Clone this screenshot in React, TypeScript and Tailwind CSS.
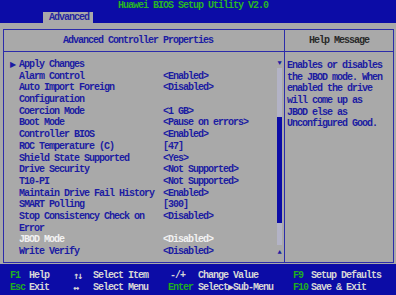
import React from "react";

const rows: { label: string; value?: string; arrow?: boolean; hi?: boolean }[] = [
  { label: "Apply Changes", arrow: true },
  { label: "Alarm Control", value: "<Enabled>" },
  { label: "Auto Import Foreign", value: "<Disabled>" },
  { label: "Configuration" },
  { label: "Coercion Mode", value: "<1 GB>" },
  { label: "Boot Mode", value: "<Pause on errors>" },
  { label: "Controller BIOS", value: "<Enabled>" },
  { label: "ROC Temperature (C)", value: "[47]" },
  { label: "Shield State Supported", value: "<Yes>" },
  { label: "Drive Security", value: "<Not Supported>" },
  { label: "T10-PI", value: "<Not Supported>" },
  { label: "Maintain Drive Fail History", value: "<Enabled>" },
  { label: "SMART Polling", value: "[300]" },
  { label: "Stop Consistency Check on", value: "<Disabled>" },
  { label: "Error" },
  { label: "JBOD Mode", value: "<Disabled>", hi: true },
  { label: "Write Verify", value: "<Disabled>" },
];

const help = [
  "Enables or disables",
  "the JBOD mode. When",
  "enabled the drive",
  "will come up as",
  "JBOD else as",
  "Unconfigured Good.",
];

export default function App() {
  return (
    <div className="w-[396px] h-[295px] bg-[#a9a9a9] flex flex-col overflow-hidden font-['Liberation_Mono','DejaVu_Sans_Mono',monospace] text-[10px] tracking-[-1px] font-bold">
      {/* top bar */}
      <div className="h-[23px] bg-[#0c0ca6] flex flex-col">
        <div className="h-[12px] pl-[118px] leading-[12px] text-[#28b428]">Huawei BIOS Setup Utility V2.0</div>
        <div className="pl-[43px] flex">
          <div className="w-[50px] h-[11px] bg-[#a9a9a9] pl-[6px] leading-[11px] text-[#2424a0]">Advanced</div>
        </div>
      </div>

      {/* body */}
      <div className="flex-1 pl-[3px] pr-[2px] pt-[6px] pb-[1px]">
        <div className="h-full border border-[#2c2caa] grid grid-cols-[281px_1fr] grid-rows-[22px_1fr]">
          <div className="border-r border-b border-[#2c2caa] flex items-center justify-center pr-[12px] text-[#1c1ca2]">
            Advanced Controller Properties
          </div>
          <div className="border-b border-[#2c2caa] flex items-center justify-center text-[#2a2a2a]">
            Help Message
          </div>

          <div className="border-r border-[#2c2caa] flex">
            <div className="flex-1 pt-[7px] flex flex-col">
              {rows.map((r, i) => (
                <div
                  key={i}
                  className={`grid grid-cols-[15px_144px_1fr] h-[11.7px] leading-[11.7px] whitespace-nowrap ${
                    r.hi ? "text-[#f2f2f2]" : "text-[#1c1ca2]"
                  }`}
                >
                  <span className="pl-[6px] text-[8px] tracking-normal font-['DejaVu_Sans',sans-serif]">{r.arrow ? "▶" : ""}</span>
                  <span>{r.label}</span>
                  <span>{r.value ?? ""}</span>
                </div>
              ))}
            </div>
            <div className="w-[5px] mr-[2px] pt-[6px] flex flex-col">
              <div className="h-[10px] flex items-center justify-center text-[7px] tracking-normal text-[#1c1ca2] leading-none">▼</div>
              <div className="h-[49px] bg-[#b3b3c6]" />
              <div className="h-[106px] bg-[#0c0ca6]" />
              <div className="h-[22px] bg-[#b3b3c6]" />
              <div className="mt-[2px] h-[10px] flex items-center justify-center text-[7px] tracking-normal text-[#1c1ca2] leading-none">▲</div>
            </div>
          </div>

          <div className="pl-[2px] pt-[8px] flex flex-col text-[#1c1ca2]">
            {help.map((l, i) => (
              <div key={i} className="h-[11.7px] leading-[11.7px] whitespace-nowrap">
                {l}
              </div>
            ))}
          </div>
        </div>
      </div>

      {/* footer */}
      <div className="h-[31px] bg-[#0c0ca6] pt-[6px] text-[#d6d6d6]">
        <div className="grid grid-cols-[10px_19px_44px_20px_75px_30px_95px_18px_1fr] h-[11.7px] leading-[11.7px] whitespace-nowrap">
          <span />
          <span className="text-[#1fae1f]">F1</span>
          <span>Help</span>
          <span className="font-['DejaVu_Sans_Mono',monospace] tracking-[-2px]">↑↓</span>
          <span>Select Item</span>
          <span className="pl-[2px]">-/+</span>
          <span>Change Value</span>
          <span className="text-[#1fae1f]">F9</span>
          <span>Setup Defaults</span>
        </div>
        <div className="grid grid-cols-[10px_19px_44px_20px_75px_30px_95px_18px_1fr] h-[11.7px] leading-[11.7px] whitespace-nowrap">
          <span />
          <span className="text-[#1fae1f]">Esc</span>
          <span>Exit</span>
          <span className="font-['DejaVu_Sans_Mono',monospace] tracking-normal">↔</span>
          <span>Select Menu</span>
          <span className="text-[#1fae1f]">Enter</span>
          <span>Select▶Sub-Menu</span>
          <span className="text-[#1fae1f]">F10</span>
          <span>Save &amp; Exit</span>
        </div>
      </div>
    </div>
  );
}
